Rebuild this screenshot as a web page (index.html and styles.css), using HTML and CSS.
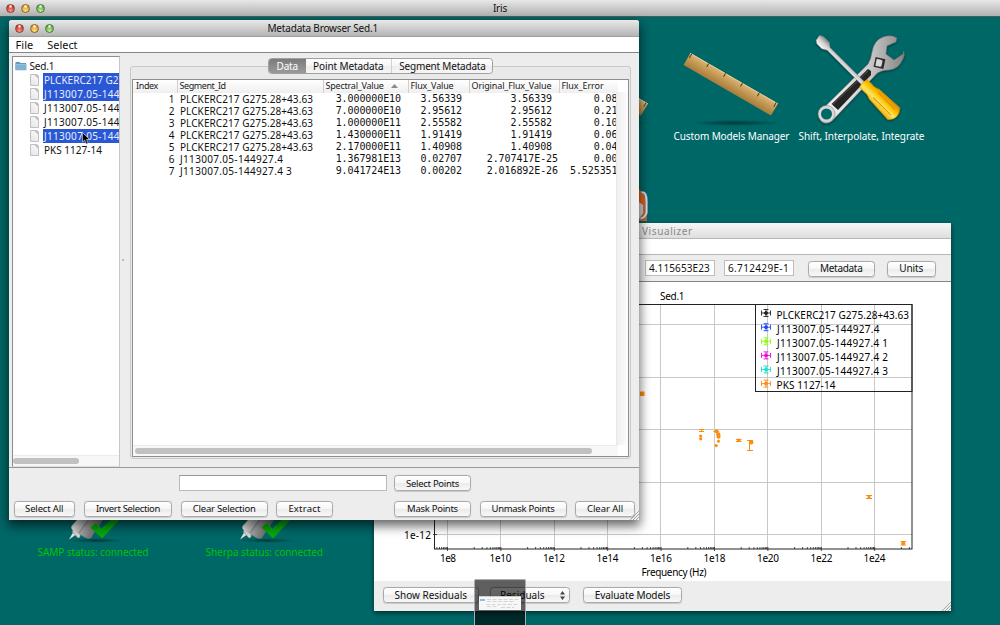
FILE: index.html
```html
<!DOCTYPE html>
<html lang="en">
<head>
<meta charset="utf-8">
<title>Iris</title>
<link rel="stylesheet" href="styles.css">
</head>
<body>
<div class="screen">
  <header class="bar bar-main">
    <span class="lights"><i class="red"></i><i class="amber"></i><i class="green"></i></span>
    <span class="bar-title iris">Iris</span>
  </header>

  <main class="desktop">
    <svg class="art" width="1000" height="609" viewBox="0 16 1000 609">
      <defs>
        <linearGradient id="wood" x1="0" y1="0" x2="0" y2="1"><stop offset="0" stop-color="#dcb578"/><stop offset=".45" stop-color="#c59a55"/><stop offset="1" stop-color="#a87c39"/></linearGradient>
        <linearGradient id="steel" x1="0" y1="0" x2="1" y2="0"><stop offset="0" stop-color="#f8f8f8"/><stop offset=".55" stop-color="#d0d0d0"/><stop offset="1" stop-color="#858585"/></linearGradient>
        <linearGradient id="yellow" x1="0" y1="0" x2="1" y2="0"><stop offset="0" stop-color="#f0a800"/><stop offset=".35" stop-color="#ffe566"/><stop offset=".6" stop-color="#ffc400"/><stop offset="1" stop-color="#d98a00"/></linearGradient>
        <radialGradient id="shade"><stop offset="0" stop-color="#002c2c" stop-opacity=".85"/><stop offset="1" stop-color="#003838" stop-opacity="0"/></radialGradient>
        <linearGradient id="plug" x1="0" y1="0" x2="1" y2=".6"><stop offset="0" stop-color="#777"/><stop offset=".3" stop-color="#eee"/><stop offset=".55" stop-color="#a5a5a5"/><stop offset="1" stop-color="#555"/></linearGradient>
        <g id="ruler">
          <ellipse cx="735" cy="123" rx="46" ry="3.2" fill="url(#shade)"/>
          <g transform="translate(690.5 53) rotate(30)">
            <rect width="101" height="14" fill="url(#wood)"/>
            <path d="M0 .4H101" stroke="#ead09c" stroke-width=".8"/>
            <path d="M1.500 0v5M21 0v4M40.500 0v4M60 0v4M79.500 0v4M99 0v5" stroke="#4c3513" stroke-width=".9"/>
          </g>
        </g>
        <g id="plugicon">
          <ellipse cx="96" cy="540.500" rx="28" ry="2.500" fill="url(#shade)"/>
          <path d="M69 539.500L73 532.500 75.500 535z" fill="#e4e4e4"/>
          <path d="M72 531.500q2-3 4-1l4 4q1 3-2 3.500z" fill="#d6d6d6" stroke="#888" stroke-width=".4"/>
          <path d="M71.500 526L85 511l20 6-14 21q-3 2-7-1L72.500 530q-2-2-1-4z" fill="url(#plug)"/>
          <path d="M79 533L92 515" stroke="#666" stroke-width="1.200" opacity=".5"/>
          <path d="M90.500 527.500l5.500-4.500 5.500 6.500 16-17 5 4-20.500 22z" fill="#06a80b"/>
          <path d="M90.500 527.500l5.500-4.500 5.500 6.500 4-4" fill="none" stroke="#23c428" stroke-width=".7"/>
        </g>
      </defs>
      <use href="#ruler"/>
      <use href="#ruler" x="-130"/>
      <g class="tools">
        <path d="M821.500 110L868 64q3-5 4-12 2-12 11-15 8-3 14 1l-1 4-9 4-1 8 8 6 9-6 .5-3q2 4-1 9-4 9-13 10-7 0-12 3L832 121q-5 4-10 1-5-4-.5-12z" fill="url(#steel)" stroke="#6d6d6d" stroke-width=".6"/>
        <path d="M831.500 104L868 69l3 2v4L838 110z" fill="#252525"/>
        <path d="M832 105L868 71" stroke="#707070" stroke-width=".6"/>
        <circle cx="826.500" cy="114" r="7" fill="#006767" stroke="#d7d7d7" stroke-width="3"/>
        <circle cx="826.500" cy="114" r="8.600" fill="none" stroke="#727272" stroke-width=".5"/>
        <g transform="translate(879.500 63) rotate(12)"><rect x="-5" y="-5" width="10" height="10" fill="#2d2d2d"/><path d="M-3 -3H1V3H-3zM2-3V3" fill="#d6d6d6" stroke="#ddd" stroke-width="1"/></g>
        <g transform="translate(821 41) rotate(-45)">
          <path d="M-3 -4L3 -5 5 -1V7L1.800 11V62h-4V11L-5 6V-1z" fill="url(#steel)" stroke="#858585" stroke-width=".5"/>
          <path d="M-5.500 60Q0 58 5.500 60V67Q4.500 70 7 75L8.500 103Q0 111 -8.500 103L-7 75Q-4.500 70 -5.500 67z" fill="url(#yellow)" stroke="#d89500" stroke-width=".5"/>
          <path d="M4 77V101M-3 77V102" stroke="#d59100" stroke-width="1"/>
        </g>
      </g>
      <path d="M630 187q13 0 16 14l1 20h-17z" fill="#d9601e"/>
      <path d="M630 202h9l4 3v8l-4 6h-9z" fill="#ccd1d7"/>
      <path d="M641.500 192.500q5-1 5 9v11q-1 5-6 6" fill="none" stroke="#6b7b84" stroke-width="3"/>
      <path d="M641.500 192.500q5-1 5 9v11q-1 5-6 6" fill="none" stroke="#d0dde4" stroke-width="1.800"/>
      <use href="#plugicon"/>
      <use href="#plugicon" x="171"/>
      <g class="labels">
        <text x="673.500" y="139.500" textLength="116">Custom Models Manager</text>
        <text x="798.500" y="139.500" textLength="126">Shift, Interpolate, Integrate</text>
      </g>
      <g class="status">
        <text x="37.500" y="555.500" textLength="111">SAMP status: connected</text>
        <text x="205.500" y="555.500" textLength="117.500">Sherpa status: connected</text>
      </g>
    </svg>

    <section class="window visualizer">
      <header class="bar bar-inactive"><span>Iris Visualizer</span></header>
      <div class="vis-menu"></div>
      <div class="vis-tools">
        <span class="field">4.115653E23</span>
        <span class="field e1">6.712429E-1</span>
        <button class="btn meta">Metadata</button>
        <button class="btn units">Units</button>
      </div>
      <svg class="plot" width="577" height="299" viewBox="374 282 577 299">
        <text x="660" y="299.500" textLength="24.500">Sed.1</text>
        <path class="grid" d="M447.500 305V549M500.500 305V549M554.500 305V549M607.500 305V549M660.500 305V549M714.500 305V549M767.500 305V549M821.500 305V549M874.500 305V549M435 324.500H912M435 377.500H912M435 429.500H912M435 482.500H912M435 534.500H912"/>
        <rect class="frame" x="434.500" y="304.500" width="477.500" height="244.500"/>
        <path id="ticks" class="tick" d=""/>
        <g class="axis">
          <text x="404" y="539" textLength="27">1e-12</text>
          <text x="440" y="562" textLength="16">1e8</text>
          <text x="489.500" y="562" textLength="22">1e10</text>
          <text x="543" y="562" textLength="22">1e12</text>
          <text x="596.500" y="562" textLength="22">1e14</text>
          <text x="650" y="562" textLength="22">1e16</text>
          <text x="703.500" y="562" textLength="22">1e18</text>
          <text x="757" y="562" textLength="22">1e20</text>
          <text x="810.500" y="562" textLength="22">1e22</text>
          <text x="863.500" y="562" textLength="22">1e24</text>
          <text x="641.500" y="576" textLength="65">Frequency (Hz)</text>
        </g>
        <g class="pts">
          <rect x="640" y="391.500" width="4.500" height="4.500"/>
          <path d="M638 383.500h1M638 386.500h1" class="ln"/>
          <path d="M699 429.500h5M699 431.500h5M701.500 429v3" class="ln"/>
          <circle cx="700.700" cy="436" r="1.600"/><circle cx="700.700" cy="438.800" r="1.600"/>
          <circle cx="716.500" cy="431.200" r="2"/><path d="M713.500 431.500h5.500" class="ln"/>
          <circle cx="718.300" cy="434.300" r="2.100"/><circle cx="718.500" cy="436.700" r="2.100"/>
          <circle cx="718.500" cy="441.300" r="1.500"/><circle cx="716.200" cy="445.600" r="1.600"/>
          <circle cx="738.800" cy="440.300" r="1.700"/>
          <path d="M736 439.500h5.500M736 441.500h5.500M747 440.500h6M747 450.500h6M749.500 440.500v10" class="ln"/>
          <circle cx="751.200" cy="442.300" r="2.200"/>
          <path d="M866 495.500h6M866 498.500h6M869 495v4M900.500 541.500h5.500M900.500 545h5.500M903 541v4" class="ln"/>
          <circle cx="869" cy="497" r="1.500"/><circle cx="903.200" cy="543.300" r="2"/>
        </g>
        <defs><g id="mark"><path d="M-4.500 0H4.500M-4.500 -2.500V2.500M4.500 -2.500V2.500M-2.500 -3.500H2.500M-2.500 3.500H2.500M0 -3.500V3.500"/><circle r="1.500"/></g></defs>
        <rect class="legend" x="755.500" y="304.500" width="156.500" height="87"/>
        <g class="marks">
          <use href="#mark" class="m1" x="766" y="313"/><use href="#mark" class="m2" x="766" y="327.200"/>
          <use href="#mark" class="m3" x="766" y="341.300"/><use href="#mark" class="m4" x="766" y="355.400"/>
          <use href="#mark" class="m5" x="766" y="369.500"/><use href="#mark" class="m6" x="766" y="383.600"/>
        </g>
        <g class="axis">
          <text x="776.500" y="319" textLength="132.500">PLCKERC217 G275.28+43.63</text>
          <text x="777" y="333" textLength="102.500">J113007.05-144927.4</text>
          <text x="777" y="347" textLength="111">J113007.05-144927.4 1</text>
          <text x="777" y="361.200" textLength="111">J113007.05-144927.4 2</text>
          <text x="777" y="375.200" textLength="111">J113007.05-144927.4 3</text>
          <text x="776.500" y="389.300" textLength="59">PKS 1127-14</text>
        </g>
      </svg>
      <footer class="vis-foot">
        <button class="btn show">Show Residuals</button>
        <button class="btn combo"><span>Residuals</span><svg width="5" height="9" viewBox="0 0 5 9"><path d="M0 3.500L2.500 0 5 3.500zM0 5.500L2.500 9 5 5.500z" fill="#444"/></svg></button>
        <button class="btn eval">Evaluate Models</button>
        <svg class="grip" width="9" height="9" viewBox="0 0 9 9"><path d="M0 9L9 0M3 9L9 3M6 9L9 6"/></svg>
      </footer>
    </section>

    <section class="window browser">
      <header class="bar bar-browser">
        <span class="lights"><i class="red"></i><i class="amber"></i><i class="green"></i></span>
        <span class="bar-title">Metadata Browser Sed.1</span>
      </header>
      <nav class="menu"><span>File</span><span class="sel">Select</span></nav>
      <div class="body">
        <aside class="tree">
          <div class="root"><svg width="12" height="10" viewBox="0 0 12 10"><path d="M.500 1h4l1 1h5.500v7H.500z" fill="#5d93b8"/><path d="M.500 3h11v6.300H.500z" fill="#7fb2d3"/><path d="M.500 3.300h11" stroke="#a9cde3" stroke-width=".7"/></svg><span>Sed.1</span></div>
          <div class="leaf on plck"><i></i><span>PLCKERC217 G275.28+43.63</span></div>
          <div class="leaf on"><i></i><span>J113007.05-144927.4</span></div>
          <div class="leaf"><i></i><span>J113007.05-144927.4 1</span></div>
          <div class="leaf"><i></i><span>J113007.05-144927.4 2</span></div>
          <div class="leaf on"><i></i><span>J113007.05-144927.4 3</span></div>
          <div class="leaf plck"><i></i><span>PKS 1127-14</span></div>
          <div class="hscroll"><b></b></div>
        </aside>
        <div class="divider"><i></i></div>
        <div class="group">
          <div class="tabs"><span class="tab active">Data</span><span class="tab pm">Point Metadata</span><span class="tab sm">Segment Metadata</span></div>
          <div class="table">
            <div class="row head"><span>Index</span><span>Segment_Id</span><span>Spectral_Value<svg width="7" height="4" viewBox="0 0 7 4"><path d="M0 4L3.500 0 7 4z" fill="#8b8b8b"/></svg></span><span>Flux_Value</span><span>Original_Flux_Value</span><span>Flux_Error</span></div>
            <div class="row"><span>1</span><span>PLCKERC217 G275.28+43.63</span><span>3.000000E10</span><span>3.56339</span><span>3.56339 </span><span>0.08</span></div>
            <div class="row"><span>2</span><span>PLCKERC217 G275.28+43.63</span><span>7.000000E10</span><span>2.95612</span><span>2.95612 </span><span>0.21</span></div>
            <div class="row"><span>3</span><span>PLCKERC217 G275.28+43.63</span><span>1.000000E11</span><span>2.55582</span><span>2.55582 </span><span>0.10</span></div>
            <div class="row"><span>4</span><span>PLCKERC217 G275.28+43.63</span><span>1.430000E11</span><span>1.91419</span><span>1.91419 </span><span>0.06</span></div>
            <div class="row"><span>5</span><span>PLCKERC217 G275.28+43.63</span><span>2.170000E11</span><span>1.40908</span><span>1.40908 </span><span>0.04</span></div>
            <div class="row j"><span>6</span><span>J113007.05-144927.4</span><span>1.367981E13</span><span>0.02707</span><span>2.707417E-25</span><span>0.00</span></div>
            <div class="row j"><span>7</span><span>J113007.05-144927.4 3</span><span>9.041724E13</span><span>0.00202</span><span>2.016892E-26</span><span>5.525351</span></div>
            <div class="hscroll wide"><b></b></div>
            <div class="vtrack"></div>
          </div>
        </div>
      </div>
      <footer class="actions">
        <div class="line"><span class="query"></span><button class="btn sm-b w76">Select Points</button></div>
        <div class="line two">
          <button class="btn sm-b b1">Select All</button><button class="btn sm-b b2">Invert Selection</button><button class="btn sm-b b3">Clear Selection</button><button class="btn sm-b b4">Extract</button><button class="btn sm-b w76 b5">Mask Points</button><button class="btn sm-b b6">Unmask Points</button><button class="btn sm-b b7">Clear All</button>
        </div>
        <svg class="grip" width="9" height="9" viewBox="0 0 9 9"><path d="M0 9L9 0M3 9L9 3M6 9L9 6"/></svg>
      </footer>
    </section>

    <div class="dock"><div class="thumb">
      <svg width="42" height="14" viewBox="0 0 42 14"><rect width="42" height="14" fill="#f7f7f7"/><path d="M0 .500H42" stroke="#ccc"/><path d="M1 4h5" stroke="#709ce0" stroke-width="1.400"/><path d="M8 3.500h32M8 5.500h28M7 8.500h33M8 10.500h10M22 11.500h13" stroke="#ccc" stroke-width=".8" stroke-dasharray="4 1.500"/></svg>
    </div></div>
    <svg class="cursor" width="8" height="13" viewBox="0 0 8 13"><path d="M.5 .5V10L2.700 8 4.200 12 6 11.300 4.500 7.500H7.500z" fill="#000" stroke="#ddd" stroke-width=".6"/></svg>
  </main>
</div>
<script src="ticks.js"></script>
</body>
</html>
```
FILE: ticks.js
```js
// Logarithmic minor ticks along the frequency axis, two decades per label.
const decade = 26.7;
const start = 447.5;
let d = "";
for (let i = -1; i < 9; i++) {
  const mid = start + decade * (2 * i + 1);
  for (let n = 1; n < 10; n++) {
    const x = mid + decade * Math.log10(n);
    if (x > 435 && x < 911) d += `M${x.toFixed(1)} 547V549`;
  }
  const major = start + 2 * decade * i;
  if (major > 435) d += `M${major.toFixed(1)} 547V551`;
}
d += "M433 534.5H437";
document.getElementById("ticks").setAttribute("d", d);
```
FILE: styles.css
```css
* { box-sizing: border-box; }
body { margin: 0; font: 10px/14px "Noto Sans", "Open Sans", sans-serif; color: #111; }
button { font: inherit; color: inherit; }
.screen { width: 1000px; height: 625px; overflow: hidden; background: #006767; display: flex; flex-direction: column; }

.bar { display: flex; align-items: center; position: relative; justify-content: center; background: linear-gradient(#e8e8e8, #cbcbcb 50%, #b2b2b2); flex: none; }
.bar-main { height: 17px; border-bottom: 1px solid #4c5a5a; }
.iris { letter-spacing: 0; }
.bar-title { white-space: nowrap; letter-spacing: -.18px; }
.lights { position: absolute; left: 6px; display: flex; gap: 6px; }
.lights i { width: 9px; height: 9px; border-radius: 50%; border: .7px solid #7b4a3e; }
.lights .red { background: radial-gradient(circle at 50% 20%, #fff 0 8%, transparent 30%), radial-gradient(circle at 50% 85%, #ff9c8e, #dd3229 65%); }
.lights .amber { background: radial-gradient(circle at 50% 20%, #fff 0 8%, transparent 30%), radial-gradient(circle at 50% 85%, #ffe788, #e59a29 65%); border-color: #8a6530; }
.lights .green { background: radial-gradient(circle at 50% 20%, #fff 0 8%, transparent 30%), radial-gradient(circle at 50% 85%, #c7f2a0, #64ad48 65%); border-color: #4d7c3c; }

.desktop { position: relative; flex: 1; }
.art { position: absolute; left: 0; top: -1px; }
.labels text { fill: #fff; }
.status text { fill: #00c400; }
.tools { filter: drop-shadow(0 1px 1px rgba(0, 30, 30, .6)); }

.window { position: absolute; background: #ededed; display: flex; flex-direction: column; }
.browser { left: 9px; top: 3px; width: 629.500px; height: 500px; border-radius: 3px 3px 0 0; box-shadow: 0 5px 11px 1px rgba(0, 0, 0, .6); }
.visualizer { left: 374px; top: 206px; width: 577px; height: 388px; box-shadow: 0 2px 5px rgba(0, 0, 0, .55); }

.btn { height: 16px; padding: 0; border: 1px solid #a9a9a9; border-radius: 3.500px; background: linear-gradient(#fff, #f6f6f6 50%, #ebebeb 52%, #f8f8f8); box-shadow: 0 .5px 1px rgba(0, 0, 0, .15); text-align: center; line-height: 13px; white-space: nowrap; flex: none; }
.grip { position: absolute; right: 0; bottom: 0; }
.grip path { stroke: #888; stroke-width: .7; }

.bar-browser { height: 17px; border-bottom: 1px solid #a0a0a0; border-radius: 3px 3px 0 0; background: linear-gradient(#e8e8e8, #cfcfcf 50%, #b4b4b4); padding-right: 2px; }
.menu { height: 16px; flex: none; background: #fff; border-bottom: 1px solid #858585; display: flex; gap: 14px; padding: 0 0 0 6.500px; line-height: 15px; font-size: 11px; letter-spacing: .05px; }
.menu .sel { letter-spacing: -.05px; }
.body { flex: none; height: 415px; display: flex; border-bottom: 1px solid #999; }

.tree { width: 108px; height: 411px; margin: 3px 0 0 3px; background: #fff; border: 1px solid #8d8d8d; border-right-color: #c6c6c6; border-bottom-color: #ddd; display: flex; flex-direction: column; padding-top: 2px; overflow: hidden; letter-spacing: .3px; }
.root { display: flex; gap: 3px; align-items: center; height: 14px; padding-left: 1.500px; letter-spacing: -.2px; }
.leaf { display: flex; height: 14px; padding-left: 17px; gap: 4px; align-items: center; white-space: nowrap; flex: none; }
.leaf i { width: 9px; height: 12px; flex: none; background: linear-gradient(225deg, #bbb 0 2px, #f6f6f6 3px, #e5e5e5); border: .5px solid #c0c0c0; border-top-right-radius: 3px; }
.leaf span { padding-left: 1px; height: 14px; width: 90px; flex: none; line-height: 14px; }
.leaf.plck span { letter-spacing: 0; }
.on span { background: #2a58d5; color: #e9effd; }
.hscroll { margin-top: auto; height: 11.500px; background: #f7f7f7; border-top: 1px solid #ebebeb; flex: none; padding: 2px 0; }
.hscroll b { display: block; height: 6.500px; width: 66px; border-radius: 4px; background: #c1c1c1; }
.divider { width: 10px; display: flex; align-items: center; }
.divider i { width: 2px; height: 2px; border-radius: 50%; background: #aaa; margin-left: 2px; }

.group { width: 501px; height: 393px; margin: 13px 0 0; border: 1px solid #c9c9c9; border-radius: 3px; background: #e9e9e9; display: flex; flex-direction: column; padding: 0 1px 1px; }
.tabs { height: 15.500px; margin: -9px 0 0 136px; display: flex; width: 225px; border: 1px solid #a0a0a0; border-radius: 3.500px; background: linear-gradient(#fff, #f5f5f5 50%, #ededed 52%, #f6f6f6); text-align: center; line-height: 14px; overflow: hidden; flex: none; }
.tab { flex: none; white-space: nowrap; }
.active { width: 36.500px; background: linear-gradient(#7b7b7b, #9a9a9a); color: #fff; letter-spacing: -.2px; }
.pm { width: 86.500px; letter-spacing: -.12px; border-right: 1px solid #cfcfcf; }
.sm { width: 101px; letter-spacing: -.2px; }
.table { position: relative; margin-top: 5.500px; flex: 1; background: #fff; border: 1px solid #8e8e8e; display: flex; flex-direction: column; overflow: hidden; }
.row { display: grid; grid-template-columns: 43.500px 146px 85px 61px 90px 59px; height: 12px; line-height: 12px; width: 485px; flex: none; overflow: hidden; font-family: "DejaVu Sans Mono", monospace; font-size: 10px; white-space: pre; letter-spacing: -.08px; }
.row span { text-align: right; min-width: 0; }
.row > span:nth-child(-n+2) { font-family: "Noto Sans", sans-serif; letter-spacing: .07px; }
.row > span:nth-child(1) { padding-right: 2px; }
.row > span:nth-child(2) { text-align: left; padding-left: 3.500px; }
.row.j > span:nth-child(2) { letter-spacing: .32px; }
.row > span:nth-child(3) { padding-right: 6.500px; }
.row > span:nth-child(4) { padding-right: 6.500px; }
.row > span:nth-child(5) { padding-right: .500px; }
.row.head { height: 12.500px; line-height: 12.500px; background: linear-gradient(#fff, #efefef); width: 485px; }
.row.head > span:nth-child(n) { font: 9px/12px "Noto Sans", sans-serif; text-align: left; padding: 0 0 0 2px; letter-spacing: -.36px; border-left: 1px solid #cfcfcf; color: #222; }
.row.head > span:nth-child(1) { border-left-color: transparent; }
.row.head > span:nth-child(2) { letter-spacing: -.42px; }
.row.head > span:nth-child(3) { letter-spacing: -.22px; }
.row.head > span:nth-child(4) { letter-spacing: -.15px; }
.row.head > span:nth-child(5) { letter-spacing: -.13px; }
.row.head > span:nth-child(6) { letter-spacing: -.07px; }
.head svg { margin: 0 0 1px 7px; vertical-align: middle; }
.wide { width: 485px; padding: 2.500px 0 0 1.500px; }
.wide b { width: 457px; height: 5.500px; }
.vtrack { position: absolute; right: 0; top: 12px; bottom: 11px; width: 12px; background: linear-gradient(90deg, #f0f0f0, #fcfcfc); border-left: 1px solid #e8e8e8; }

.actions { flex: 1; position: relative; padding: 7px 0 0 4.500px; display: flex; flex-direction: column; gap: 9.500px; }
.line { display: flex; padding-left: 165.500px; gap: 7px; height: 16px; }
.query { width: 208px; height: 16px; background: #fff; border: 1px solid #bbb; border-top-color: #999; }
.sm-b { font-size: 9.500px; letter-spacing: -.28px; }
.w76 { width: 77px; }
.two { padding: 0; gap: 0; }
.b1 { width: 61.500px; letter-spacing: -.15px; margin-right: 9px; }
.b2 { width: 88px; letter-spacing: -.34px; margin-right: 9px; }
.b3 { width: 86.500px; letter-spacing: -.2px; margin-right: 8.500px; }
.b4 { width: 57px; letter-spacing: .2px; margin-right: 61px; }
.b5 { margin-right: 8.500px; }
.b6 { width: 87px; letter-spacing: -.32px; margin-right: 8.500px; }
.b7 { width: 60px; letter-spacing: -.05px; }

.bar-inactive { height: 16px; background: linear-gradient(#f6f6f6, #dedede); border-bottom: 1px solid #b7b7b7; color: #888; justify-content: flex-start; padding-left: 247.500px; letter-spacing: .6px; white-space: nowrap; }
.vis-menu { height: 15.500px; background: #fff; border-bottom: 1px solid #b5b5b5; flex: none; }
.vis-tools { height: 27.500px; border-bottom: 1px solid #858585; flex: none; display: flex; align-items: center; padding: 1px 0 0 271px; }
.field { width: 70px; height: 16px; margin-right: 9px; padding-left: 3px; background: #fff; border: 1px solid #bdbdbd; line-height: 14px; letter-spacing: .1px; white-space: nowrap; }
.e1 { letter-spacing: .34px; margin-right: 14px; }
.meta { width: 66.500px; letter-spacing: -.3px; margin: 1px 12.500px 0 0; }
.units { width: 48.500px; letter-spacing: -.1px; margin-top: 1px; }
.plot { display: block; background: #fff; flex: none; }
.grid { stroke: #c8c8c8; fill: none; }
.frame, .legend { fill: none; stroke: #222; stroke-width: 1; }
.tick { stroke: #222; stroke-width: .8; }
.pts { fill: #ff8c0a; }
.ln { stroke: #ff8c0a; fill: none; stroke-width: 1; }
.marks { stroke-width: .9; }
.marks .m1 { stroke: #222; fill: #222; }
.marks .m2 { stroke: #1848ff; fill: #1848ff; }
.marks .m3 { stroke: #8cff0a; fill: #8cff0a; }
.marks .m4 { stroke: #f000e0; fill: #f000e0; }
.marks .m5 { stroke: #0ce6cf; fill: #0ce6cf; }
.marks .m6 { stroke: #ff8c0a; fill: #ff8c0a; }
.vis-foot { flex: 1; position: relative; display: flex; padding: 6px 0 0 9px; }
.show { width: 95.500px; margin-right: 11.500px; }
.combo { width: 80px; margin-right: 13px; display: flex; justify-content: space-between; align-items: center; padding: 0 4px 0 9px; }
.eval { width: 99px; letter-spacing: -.1px; }

.dock { position: absolute; left: 474px; top: 562px; width: 52px; height: 48px; background: rgba(0, 0, 0, .6); border: 1px solid #a5adad; border-bottom: 0; border-radius: 2px 2px 0 0; display: flex; justify-content: center; padding-top: 16px; }
.thumb { height: 14px; line-height: 0; }
.cursor { position: absolute; left: 81.500px; top: 115px; }
```
